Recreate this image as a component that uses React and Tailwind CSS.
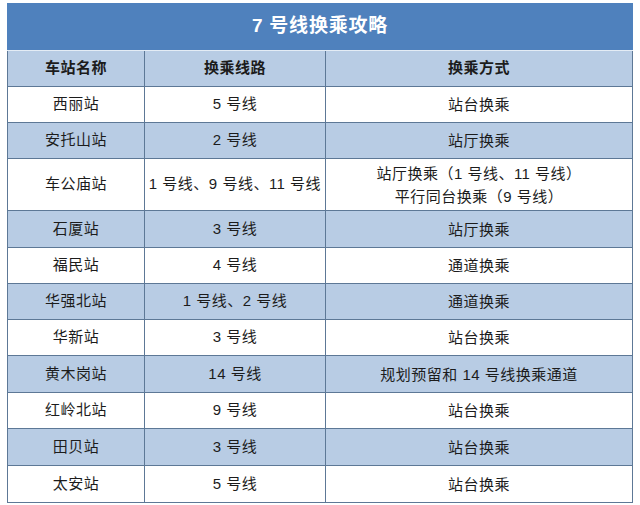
import React from "react";

const rows = [
  { name: "西丽站", line: "5 号线", mode: ["站台换乘"], h: "h-[36px]", alt: false },
  { name: "安托山站", line: "2 号线", mode: ["站厅换乘"], h: "h-[36px]", alt: true },
  { name: "车公庙站", line: "1 号线、9 号线、11 号线", mode: ["站厅换乘（1 号线、11 号线）", "平行同台换乘（9 号线）"], h: "h-[52px]", alt: false },
  { name: "石厦站", line: "3 号线", mode: ["站厅换乘"], h: "h-[37px]", alt: true },
  { name: "福民站", line: "4 号线", mode: ["通道换乘"], h: "h-[36px]", alt: false },
  { name: "华强北站", line: "1 号线、2 号线", mode: ["通道换乘"], h: "h-[36px]", alt: true },
  { name: "华新站", line: "3 号线", mode: ["站台换乘"], h: "h-[36px]", alt: false },
  { name: "黄木岗站", line: "14 号线", mode: ["规划预留和 14 号线换乘通道"], h: "h-[37px]", alt: true },
  { name: "红岭北站", line: "9 号线", mode: ["站台换乘"], h: "h-[36px]", alt: false },
  { name: "田贝站", line: "3 号线", mode: ["站台换乘"], h: "h-[37px]", alt: true },
  { name: "太安站", line: "5 号线", mode: ["站台换乘"], h: "h-[37px]", alt: false },
];

const font = { fontFamily: "'Liberation Sans', 'Noto Sans CJK SC', sans-serif" };

export default function App() {
  return (
    <div className="w-[640px] h-[505px] bg-white" style={font}>
      <div className="ml-[7px] pt-[3px] w-[626px]">
        <div className="h-[47px] bg-[#4f81bd] flex items-center justify-center text-white font-bold text-[19px] tracking-[0.8px]">
          7 号线换乘攻略
        </div>
        <div className="h-px bg-[#e4ecf5]" />
        <div className="border-l border-r border-[#5d7896] text-[15px] tracking-[0.5px] text-[#1c1c1c]">
          <div className="flex h-[36px] bg-[#b8cce4] border-b border-[#5d7896] font-bold">
            <div className="w-[137px] border-r border-[#5d7896] flex items-center justify-center">车站名称</div>
            <div className="w-[181px] border-r border-[#5d7896] flex items-center justify-center">换乘线路</div>
            <div className="flex-1 flex items-center justify-center">换乘方式</div>
          </div>
          {rows.map((r) => (
            <div
              key={r.name}
              className={`flex border-b border-[#5d7896] ${r.h} ${r.alt ? "bg-[#b8cce4]" : "bg-white"}`}
            >
              <div className="w-[137px] border-r border-[#5d7896] flex items-center justify-center">{r.name}</div>
              <div className="w-[181px] border-r border-[#5d7896] flex items-center justify-center">{r.line}</div>
              <div className="flex-1 flex flex-col items-center justify-center leading-[23px]">
                {r.mode.map((m) => (
                  <div key={m}>{m}</div>
                ))}
              </div>
            </div>
          ))}
        </div>
      </div>
    </div>
  );
}
